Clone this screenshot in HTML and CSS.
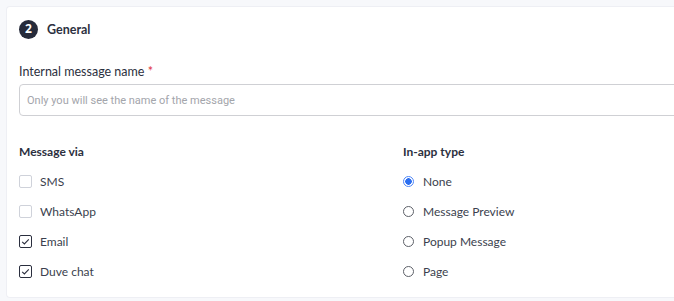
FILE: index.html
```html
<!DOCTYPE html>
<html>
<head>
<meta charset="utf-8">
<link rel="stylesheet" href="styles.css">
</head>
<body>
<div class="page">
  <section class="card">
    <header class="card-head">
      <span class="step">2</span>
      <h2 class="title">General</h2>
    </header>
    <div class="field">
      <label class="label">Internal message name <span class="req">*</span></label>
      <input class="input" type="text" placeholder="Only you will see the name of the message">
    </div>
    <div class="cols">
      <div class="col">
        <h3 class="col-title">Message via</h3>
        <ul class="options">
          <li class="opt"><span class="cb"></span>SMS</li>
          <li class="opt"><span class="cb"></span>WhatsApp</li>
          <li class="opt"><span class="cb checked"><svg viewBox="0 0 13 13" width="13" height="13"><path d="M3.2 6.8 L5.4 9 L9.8 4.3" fill="none" stroke="#2a2e3e" stroke-width="1.1"/></svg></span>Email</li>
          <li class="opt"><span class="cb checked"><svg viewBox="0 0 13 13" width="13" height="13"><path d="M3.2 6.8 L5.4 9 L9.8 4.3" fill="none" stroke="#2a2e3e" stroke-width="1.1"/></svg></span>Duve chat</li>
        </ul>
      </div>
      <div class="col">
        <h3 class="col-title">In-app type</h3>
        <ul class="options">
          <li class="opt"><span class="rb on"></span>None</li>
          <li class="opt"><span class="rb"></span>Message Preview</li>
          <li class="opt"><span class="rb"></span>Popup Message</li>
          <li class="opt"><span class="rb"></span>Page</li>
        </ul>
      </div>
    </div>
  </section>
</div>
</body>
</html>
```

FILE: styles.css
```css
* { box-sizing: border-box; }
html, body { margin: 0; padding: 0; }
body {
  background: #f7f8fb;
  font-family: Lato, "Open Sans", sans-serif;
  color: #2c3040;
  width: 674px;
  height: 301px;
  overflow: hidden;
}
.page { padding: 6px 0 0 6px; }
.card {
  background: #fff;
  border: 1px solid #eeeff4;
  border-right: none;
  border-radius: 4px 0 0 4px;
  width: 668px;
  height: 292px;
  padding: 12px 0 0 12px;
  overflow: hidden;
}
.card-head { display: flex; align-items: center; height: 20px; }
.step {
  width: 19px; height: 19px; border-radius: 50%;
  background: #262b3b; color: #fff;
  font-family: "Open Sans", sans-serif;
  font-weight: 700; font-size: 12px;
  display: flex; align-items: center; justify-content: center;
  line-height: 1;
}
.title { margin: 0 0 0 9px; font-size: 12.5px; font-weight: 700; color: #2c3040; }
.field { margin-top: 24px; }
.label { display: block; font-size: 12.5px; line-height: 17px; color: #2c3040; }
.req { color: #e0323c; }
.input {
  display: block; margin-top: 4px;
  width: 680px; height: 32px;
  border: 1px solid #cfd0d4; border-radius: 4px;
  padding: 0 0 0 7px;
  font-family: Roboto, sans-serif; font-size: 11px;
  color: #2c3040;
  outline: none;
}
.input::placeholder { color: #a3a5ab; }
.cols { display: flex; margin-top: 27px; }
.col { width: 384px; flex-shrink: 0; }
.col-title { margin: 0; font-size: 12px; font-weight: 700; line-height: 17px; }
.options { list-style: none; margin: 6px 0 0; padding: 0; }
.opt { display: flex; align-items: center; height: 30px; font-size: 12px; color: #3b3f4e; }
.cb {
  width: 13px; height: 13px; border: 1px solid #cfd2da; border-radius: 2px;
  margin-right: 8px;
  position: relative;
}
.cb.checked { border-color: #2a2e3e; }
.cb svg { position: absolute; left: -1px; top: -1px; }
.rb {
  width: 11px; height: 11px; border: 1px solid #5d6068; border-radius: 50%;
  margin-right: 9px;
}
.rb.on { border-color: #4f86f7; background: radial-gradient(circle, #2b6ef0 0 3px, #fff 3.5px); }
```
